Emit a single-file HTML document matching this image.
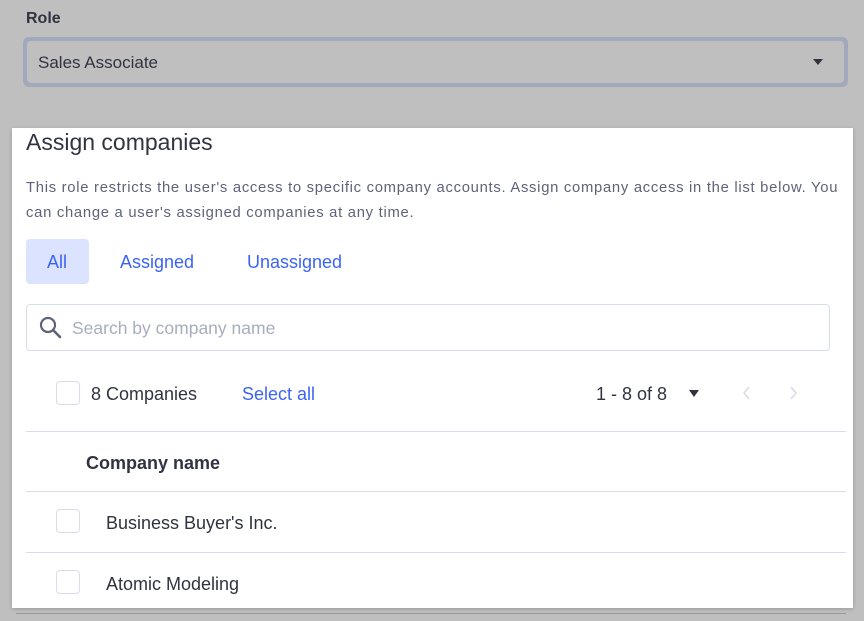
<!DOCTYPE html>
<html><head><style>
body{margin:0;width:864px;height:621px;background:#bfbfbf;font-family:"Liberation Sans",sans-serif;position:relative;overflow:hidden;color:#313440}
.a{position:absolute;white-space:nowrap}
.cb{position:absolute;width:24px;height:24px;border:1px solid #d9dce9;border-radius:4px;background:#fff;box-sizing:border-box}
.ln{position:absolute;left:26px;width:820px;height:1px;background:#d9dce9}
</style></head><body>
<div class="a" style="left:26px;top:10px;font-size:16px;font-weight:bold;color:#313440">Role</div>
<div class="a" style="left:23px;top:37px;width:825px;height:50px;border-radius:6px;background:#a2a9bd"></div>
<div class="a" style="left:27px;top:41px;width:817px;height:42px;border-radius:4px;background:#bfbfbf"></div>
<div class="a" style="left:38px;top:53px;font-size:17px;color:#313440">Sales Associate</div>
<div class="a" style="left:813px;top:59px;width:0;height:0;border-left:5px solid transparent;border-right:5px solid transparent;border-top:6px solid #313440"></div>
<div class="a" style="left:12px;top:128px;width:841px;height:480px;background:#fff;box-shadow:0 1px 4px rgba(0,0,0,.2)"></div>
<div class="a" style="left:26px;top:129px;font-size:23px;color:#313440">Assign companies</div>
<div class="a" style="left:26px;top:176px;font-size:14.8px;letter-spacing:0.72px;line-height:25px;color:#5e637a;white-space:nowrap">This role restricts the user's access to specific company accounts. Assign company access in the list below. You<br>can change a user's assigned companies at any time.</div>
<div class="a" style="left:26px;top:239px;width:63px;height:45px;background:#dbe3fe;border-radius:4px"></div>
<div class="a" style="left:47px;top:252px;font-size:18px;color:#3c64f4">All</div>
<div class="a" style="left:120px;top:252px;font-size:18px;color:#3c64f4">Assigned</div>
<div class="a" style="left:247px;top:252px;font-size:18px;color:#3c64f4">Unassigned</div>
<div class="a" style="left:26px;top:304px;width:804px;height:47px;border:1px solid #d9dce9;border-radius:4px;box-sizing:border-box"></div>
<svg class="a" style="left:38px;top:315px" width="26" height="26" viewBox="0 0 26 26"><circle cx="10" cy="10" r="7" fill="none" stroke="#5e637a" stroke-width="2.2"/><path d="M15 15l7 7" stroke="#5e637a" stroke-width="2.6" stroke-linecap="round"/></svg>
<div class="a" style="left:72px;top:318px;font-size:17.5px;color:#a8adbd">Search by company name</div>
<div class="cb" style="left:56px;top:381px"></div>
<div class="a" style="left:91px;top:384px;font-size:18px;color:#313440">8 Companies</div>
<div class="a" style="left:242px;top:384px;font-size:18px;color:#3c64f4">Select all</div>
<div class="a" style="left:596px;top:384px;font-size:18px;color:#313440">1 - 8 of 8</div>
<div class="a" style="left:689px;top:390px;width:0;height:0;border-left:5px solid transparent;border-right:5px solid transparent;border-top:7px solid #313440"></div>
<svg class="a" style="left:740px;top:384px" width="60" height="18"><path d="M9 3l-5 6 5 6M51 3l5 6-5 6" fill="none" stroke="#d9dce9" stroke-width="1.6"/></svg>
<div class="ln" style="top:431px"></div>
<div class="a" style="left:86px;top:453px;font-size:18px;font-weight:bold;color:#313440">Company name</div>
<div class="ln" style="top:491px"></div>
<div class="cb" style="left:56px;top:509px"></div>
<div class="a" style="left:106px;top:513px;font-size:18px;color:#313440">Business Buyer's Inc.</div>
<div class="ln" style="top:552px"></div>
<div class="cb" style="left:56px;top:570px"></div>
<div class="a" style="left:106px;top:574px;font-size:18px;color:#313440">Atomic Modeling</div>
<div class="a" style="left:16px;top:613px;width:830px;height:1px;background:#999"></div>
</body></html>
